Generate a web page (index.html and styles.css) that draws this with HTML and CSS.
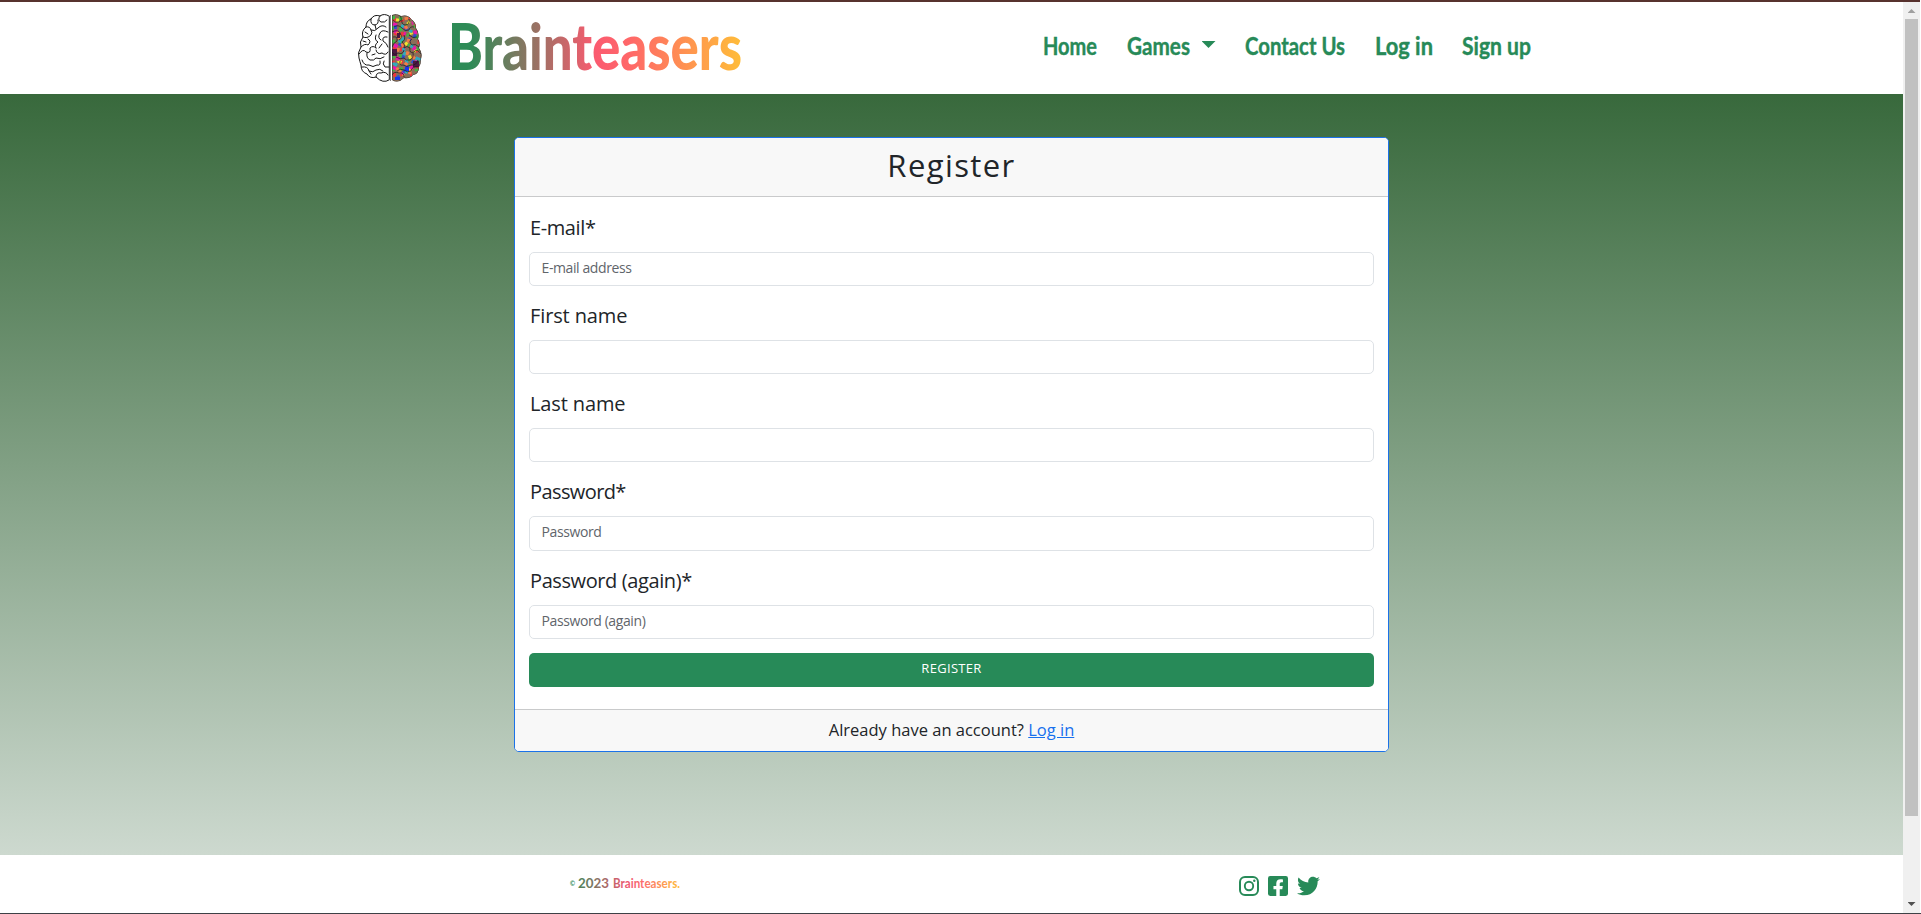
FILE: index.html
```html
<!DOCTYPE html>
<html lang="en">
<head>
<meta charset="utf-8">
<title>Register</title>
<link rel="stylesheet" href="styles.css">
</head>
<body>
<div class="top-edge"></div>
<div class="window">
<div class="page">
<header class="navbar">
  <a class="brand">
    <svg class="brain" viewBox="0 0 64 68">
      <defs>
        <clipPath id="half"><path d="M34 1Q39-1 43 2Q50 0 53 5Q58 8 58 14Q62 19 60 25Q63 29 61 34Q65 39 63 45Q63 50 61 53Q61 60 55 61Q52 65 46 64Q40 70 34 66Z"/></clipPath>
      </defs>
      <g fill="none" stroke="#161616" stroke-width="1" stroke-linecap="round">
        <path d="M31 2Q26-1 22 2Q16 0 13 5Q8 7 8 13Q3 17 5 23Q1 28 3 33Q-1 39 1 44Q2 48 3 51Q3 58 9 60Q12 65 18 63Q25 70 31 66Z"/>
        <path d="M22 2Q19 6 23 8Q27 9 29 6M13 5Q12 11 17 11Q21 10 20 6M8 13Q12 12 13 16Q17 18 20 14Q24 10 28 13M5 23Q9 25 13 21Q15 18 13 16M18 21Q16 26 20 28Q16 31 18 34M30 18Q24 15 22 19Q19 24 23 26M29 23Q24 22 25 27Q29 29 30 33M3 33Q7 29 10 31Q14 27 10 25M1 40Q5 34 8 38Q13 40 12 34Q15 31 18 34M9 39Q8 44 12 46Q16 47 18 44Q22 46 26 43M4 46Q6 52 11 51Q15 54 19 51Q23 52 22 47M18 36Q19 41 24 39Q28 42 30 38M4 53Q10 52 11 57Q15 59 18 56Q22 54 25 57M18 63Q18 58 23 59Q28 57 30 61M26 47Q24 50 27 53L31 53M13 60L11 57M17 11L18 15M24 30L21 34M7 18L10 20M5 27L8 28M14 41L17 40"/>
      </g>
      <path d="M32.4 1V67" stroke="#777" stroke-width="1"/>
      <g clip-path="url(#half)">
        <path fill="#8a6e58" d="M33 0h31v68H33z"/>
        <g fill="none" stroke-width="3.6" stroke-dasharray="3 4 4 6 2 7">
          <path stroke="#ee353c" d="M35 5Q43 8 48 4T59 14M36 20Q43 17 49 23T61 28M35 34Q42 38 48 33T62 41M34 49Q44 46 49 51T61 53M35 61L55 60"/>
          <path stroke="#42b443" d="M34 4Q42 1 45 8T57 12M34 14Q42 13 46 18T61 23M34 28Q42 25 47 29T62 36M34 43Q43 40 49 44T62 48M34 55Q42 57 49 53T59 57"/>
          <path stroke="#f0e42f" stroke-dasharray="3 9 2 10" d="M38 6L50 8L55 18L40 24L50 31L60 39L42 48L54 57L39 62"/>
          <path stroke="#e916aa" stroke-dasharray="4 6 2 8" d="M35 10L45 13L55 9M36 17L48 20L59 18M36 31L50 37L61 32M38 44L50 48L61 44M35 53L45 59L56 52"/>
          <path stroke="#304fcf" stroke-dasharray="3 8" d="M36 13L49 15L59 24L45 27L35 39L47 43L57 49L43 54L48 59L37 65"/>
          <path stroke="#31aabb" stroke-dasharray="3 10" d="M43 12L54 14L49 25L37 25L56 33L40 37L60 45L37 50L52 60"/>
          <path stroke="#f47c45" stroke-dasharray="3 7" d="M48 3L50 12L36 22L52 27L38 35L57 42L46 52L36 57L58 59"/>
        </g>
        <path fill="#4c1741" d="M34 35h5v7h-5zM55 47h6v6h-6zM39 19h3v5h-3z"/>
        <path fill="#1635ed" d="M47 53h4v4h-4zM37 63h5v3h-5z"/>
        <g fill="none" stroke="#171820" stroke-width=".7">
          <path d="M42 2Q45 6 41 8Q37 9 35 6M51 5Q52 11 47 11Q43 10 44 6M56 13Q52 12 51 16Q47 18 44 14Q40 10 36 13M59 23Q55 25 51 21M46 21Q48 26 44 28Q48 31 46 34M34 18Q40 15 42 19Q45 24 41 26M35 23Q40 22 39 27Q35 29 34 33M61 33Q57 29 54 31Q50 27 54 25M63 40Q59 34 56 38Q51 40 52 34Q49 31 46 34M55 39Q56 44 52 46Q48 47 46 44Q42 46 38 43M60 46Q58 52 53 51Q49 54 45 51Q41 52 42 47M46 36Q45 41 40 39Q36 42 34 38M60 53Q54 52 53 57Q49 59 46 56Q42 54 39 57M46 63Q46 58 41 59Q36 57 34 61"/>
          <path d="M34 1Q39-1 43 2Q50 0 53 5Q58 8 58 14Q62 19 60 25Q63 29 61 34Q65 39 63 45Q63 50 61 53Q61 60 55 61Q52 65 46 64Q40 70 34 66Z"/>
        </g>
      </g>
    </svg>
    <svg class="wordmark" viewBox="0 0 292 76">
      <defs><linearGradient id="fade" gradientUnits="userSpaceOnUse" x1="0" x2="292" y1="0" y2="0">
        <stop offset=".07" stop-color="#2e8b57"/><stop offset=".5" stop-color="#fb5b70"/><stop offset=".62" stop-color="#ff6868"/><stop offset="1" stop-color="#ffbd39"/>
      </linearGradient></defs>
      <text class="display logo-text" x="-2" y="55.5" textLength="294" lengthAdjust="spacingAndGlyphs">Brainteasers</text>
    </svg>
  </a>
  <nav class="links">
    <svg width="54" height="34"><text class="display link" y="24" textLength="54" lengthAdjust="spacingAndGlyphs">Home</text></svg>
    <div class="dropdown"><svg width="63" height="34"><text class="display link" y="24" textLength="63" lengthAdjust="spacingAndGlyphs">Games</text></svg><i class="caret"></i></div>
    <svg width="100" height="34"><text class="display link" y="24" textLength="100" lengthAdjust="spacingAndGlyphs">Contact Us</text></svg>
    <svg width="58" height="34"><text class="display link" y="24" textLength="58" lengthAdjust="spacingAndGlyphs">Log in</text></svg>
    <svg width="69" height="34"><text class="display link" y="24" textLength="69" lengthAdjust="spacingAndGlyphs">Sign up</text></svg>
  </nav>
</header>
<main class="main">
  <form class="card">
    <h1 class="card-header">Register</h1>
    <div class="card-body">
      <div class="field"><label class="label l-email">E-mail*</label><div class="input">E-mail address</div></div>
      <div class="field"><label class="label l-name">First name</label><div class="input"></div></div>
      <div class="field"><label class="label l-name">Last name</label><div class="input"></div></div>
      <div class="field"><label class="label l-pass">Password*</label><div class="input">Password</div></div>
      <div class="field"><label class="label l-email">Password (again)*</label><div class="input">Password (again)</div></div>
      <div class="button">REGISTER</div>
    </div>
    <div class="card-footer">Already have an account? <a class="login">Log in</a></div>
  </form>
</main>
<footer class="footer">
  <svg class="copyright" width="112" height="28">
    <defs><linearGradient id="fade2" gradientUnits="userSpaceOnUse" x1="0" x2="112" y1="0" y2="0">
      <stop offset="0" stop-color="#2e8b57"/><stop offset=".5" stop-color="#ec5870"/><stop offset=".62" stop-color="#fb6870"/><stop offset="1" stop-color="#ffc039"/>
    </linearGradient></defs>
    <text class="display copy mark" x="0" y="17" textLength="5" lengthAdjust="spacingAndGlyphs">©</text>
    <text class="display copy" x="8" y="19" textLength="31" lengthAdjust="spacingAndGlyphs">2023</text>
    <text class="display copy" x="43" y="19" textLength="67" lengthAdjust="spacingAndGlyphs">Brainteasers.</text>
  </svg>
  <div class="social">
    <svg width="20" height="20" viewBox="0 0 20 20"><rect x="1" y="1" width="18" height="18" rx="5" fill="none" stroke="#278a58" stroke-width="2"/><circle cx="10" cy="10" r="4.2" fill="none" stroke="#278a58" stroke-width="1.9"/><circle cx="15.3" cy="4.8" r="1.2" fill="#278a58"/></svg>
    <svg width="20" height="20" viewBox="0 0 448 448"><path fill="#278a58" d="M400 0H48A48 48 0 0 0 0 48v352a48 48 0 0 0 48 48h137.250V295.690h-63V224h63v-54.640c0-62.150 37-96.480 93.670-96.480 27.140 0 55.520 4.840 55.520 4.840v61h-31.270c-30.810 0-40.420 19.120-40.420 38.730V224h68.780l-11 71.690h-57.780V448H400a48 48 0 0 0 48-48V48a48 48 0 0 0-48-48z"/></svg>
    <svg width="23" height="20" viewBox="0 46 512 420"><path fill="#278a58" d="M459.370 151.716c.325 4.548.325 9.097.325 13.645 0 138.720-105.583 298.558-298.558 298.558-59.452 0-114.680-17.219-161.137-47.106 8.447.974 16.568 1.299 25.340 1.299 49.055 0 94.213-16.568 130.274-44.832-46.132-.975-84.792-31.188-98.112-72.772 6.498.974 12.995 1.624 19.818 1.624 9.421 0 18.843-1.300 27.614-3.573-48.081-9.747-84.143-51.980-84.143-102.985v-1.299c13.969 7.797 30.214 12.670 47.431 13.319-28.264-18.843-46.781-51.005-46.781-87.391 0-19.492 5.197-37.360 14.294-52.954 51.655 63.675 129.300 105.258 216.365 109.807-1.624-7.797-2.599-15.918-2.599-24.040 0-57.828 46.782-104.934 104.934-104.934 30.213 0 57.502 12.670 76.670 33.137 23.715-4.548 46.456-13.320 66.599-25.340-7.798 24.366-24.366 44.833-46.132 57.827 21.117-2.273 41.584-8.122 60.426-16.243-14.292 20.791-32.161 39.308-52.628 54.253z"/></svg>
  </div>
</footer>
</div>
<aside class="scrollbar"><i class="arrow up"></i><i class="thumb"></i><i class="arrow down"></i></aside>
</div>
<div class="bottom-edge"></div>
</body>
</html>
```
FILE: styles.css
```css
* { box-sizing: border-box; }
body {
  margin: 0;
  height: 914px;
  overflow: hidden;
  display: flex;
  flex-direction: column;
  font-family: "Open Sans", sans-serif;
  color: #212529;
  background: #fff;
}
.top-edge { height: 2px; width: 1920px; background: #57322e; }
.bottom-edge { height: 1px; background: #3e4146; }
.window { height: 911px; display: flex; }
.page { width: 1903px; display: flex; flex-direction: column; }
.navbar {
  height: 92px;
  display: flex;
  justify-content: space-between;
  padding: 0 372px 0 358px;
  background: #fff;
}
.brand { display: flex; gap: 28px; padding-top: 12px; }
.brain { width: 64px; height: 68px; }
.wordmark { width: 292px; height: 76px; overflow: visible; }
.display { font-family: "Lato", sans-serif; font-weight: 700; }
.logo-text { font-size: 64px; font-weight: 900; fill: url(#fade); }
.links { display: flex; gap: 29.5px; padding-top: 29px; }
.links svg { overflow: visible; }
.link { font-size: 25px; fill: #278a58; stroke: #278a58; stroke-width: .4px; }
.dropdown { display: flex; gap: 12px; }
.caret {
  width: 14px;
  height: 7px;
  margin-top: 10px;
  background: #278a58;
  clip-path: polygon(0 0, 100% 0, 50% 100%);
}
.main {
  height: 761px;
  padding-top: 43px;
  background: linear-gradient(#38693c, #cdd9cf);
}
.card {
  width: 875px;
  height: 615px;
  margin: 0 auto;
  border: 1px solid #1b72e8;
  border-radius: 5px;
  background: #fff;
  overflow: hidden;
}
.card-header {
  margin: 0;
  height: 59px;
  border-bottom: 1px solid #c9cacb;
  background: #f8f8f8;
  text-align: center;
  font-size: 31px;
  font-weight: 400;
  line-height: 55px;
  letter-spacing: 1.4px;
}
.card-body { height: 512px; padding: 14.500px 14px 0; }
.field { height: 88.3px; }
.label { display: block; height: 40px; line-height: 31px; font-size: 20px; padding-left: 1px; white-space: nowrap; }
.l-email { letter-spacing: -.4px; }
.l-name { letter-spacing: -.12px; }
.l-pass { letter-spacing: -.6px; }
.input {
  height: 34.300px;
  border: 1px solid #dee2e6;
  border-radius: 5px;
  padding-left: 11.500px;
  font-size: 14px;
  letter-spacing: -.4px;
  line-height: 29px;
  color: #5f656b;
}
.button {
  height: 34px;
  border-radius: 5px;
  background: #278a58;
  color: #fff;
  text-align: center;
  font-size: 13px;
  letter-spacing: .3px;
  line-height: 31px;
}
.card-footer {
  height: 43px;
  border-top: 1px solid #c9cacb;
  background: #f8f8f8;
  text-align: center;
  font-size: 16.500px;
  line-height: 39px;
}
.login { color: #1770ee; text-decoration: underline; }
.footer {
  height: 58px;
  display: flex;
  justify-content: space-between;
  padding: 21px 583px 0 570px;
  background: #fff;
}
.copyright { margin-top: -7px; overflow: visible; }
.copy { font-size: 14px; fill: url(#fade2); }
.mark { font-size: 8px; }
.social { display: flex; gap: 9px; }
.scrollbar {
  width: 17px;
  display: flex;
  flex-direction: column;
  align-items: center;
  background: #f0f0f0;
}
.thumb { width: 13px; height: 797px; margin: 6px 2px 86px; background: #c1c1c1; }
.arrow { width: 8px; height: 4px; }
.up { margin-top: 7px; background: #a0a0a0; clip-path: polygon(50% 0, 100% 100%, 0 100%); }
.down { background: #505050; clip-path: polygon(0 0, 100% 0, 50% 100%); }
```
